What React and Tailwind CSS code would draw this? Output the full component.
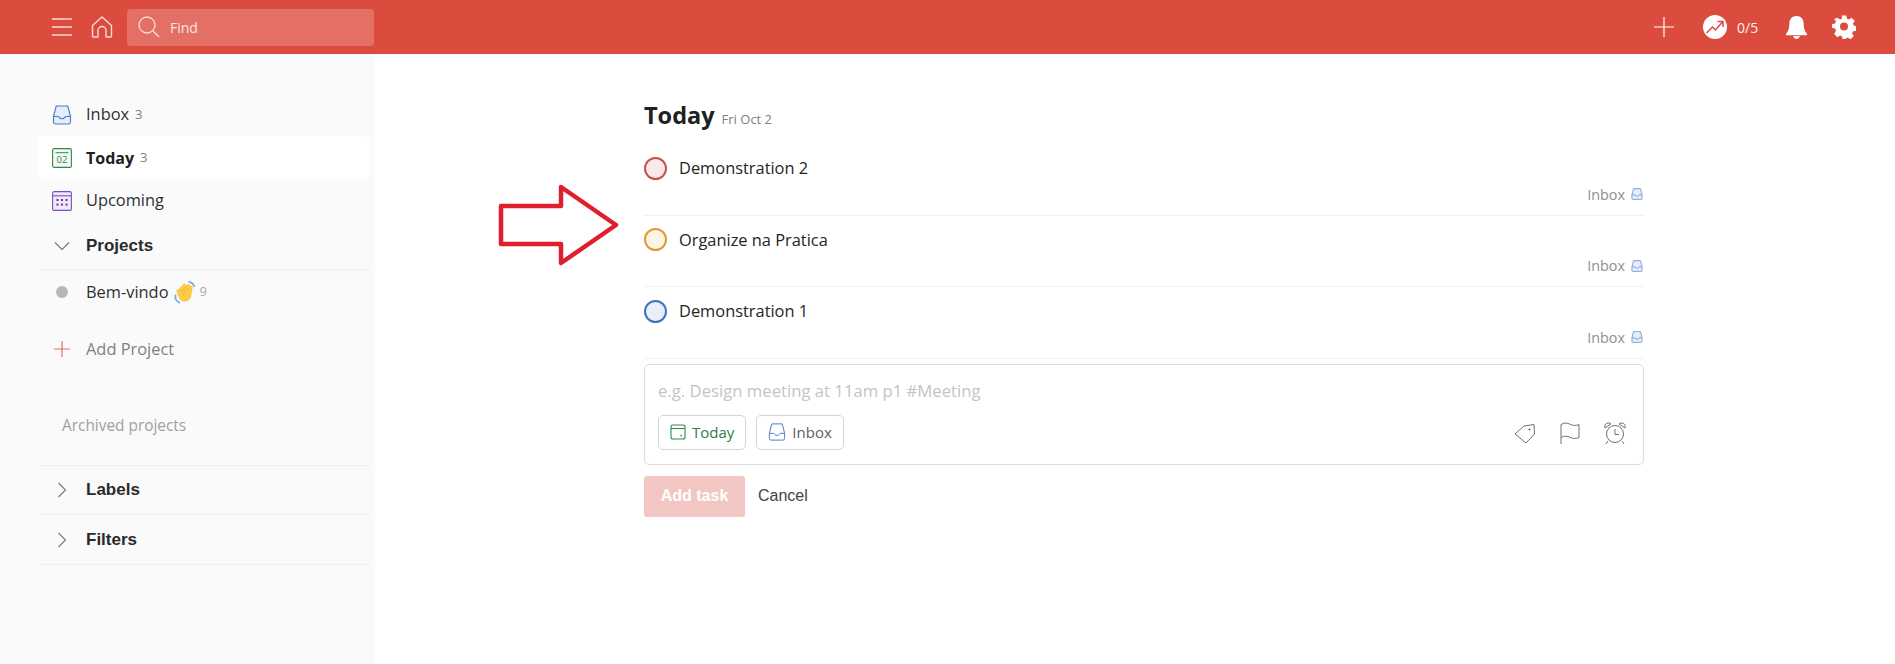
const uiFont = "font-['Open_Sans','Noto_Sans',sans-serif]";
const boldFont = "font-['Liberation_Sans',Arial,sans-serif]";

function InboxIcon({ className = "w-5 h-5", fill = "#e3edfb" }) {
  return (
    <svg viewBox="0 0 20 20" className={className} fill="none">
      <path d="M4.200 1h11.600l2.700 10.500v5.600a1.900 1.900 0 0 1-1.900 1.900H3.400a1.900 1.900 0 0 1-1.900-1.900V11.500z" fill={fill} stroke="#4d7cc4" strokeWidth="1.100" strokeLinejoin="round" />
      <path d="M1.700 11.500h4.600c.7 0 .9 2.300 3.700 2.300s3-2.300 3.700-2.300h4.600" stroke="#4d7cc4" strokeWidth="1.100" />
    </svg>
  );
}

function TodayIcon() {
  return (
    <svg viewBox="0 0 20 20" className="w-5 h-5" fill="none">
      <rect x="0.6" y="0.6" width="18.8" height="18.8" rx="1.5" fill="#f2f9f3" stroke="#2f8a4a" strokeWidth="1.100" />
      <path d="M3.500 4.700h13" stroke="#2f8a4a" strokeWidth="1" />
      <text x="10" y="15.300" textAnchor="middle" fontSize="9.500" fill="#3f7a52" fontFamily="'Open Sans',sans-serif">02</text>
    </svg>
  );
}

function UpcomingIcon() {
  return (
    <svg viewBox="0 0 20 20" className="w-5 h-5" fill="none">
      <rect x="0.6" y="0.6" width="18.8" height="18.8" rx="1.5" fill="#f1e8fc" stroke="#7a4fc0" strokeWidth="1.100" />
      <path d="M1 4.800h18" stroke="#7a4fc0" strokeWidth="1.100" />
      {[5.5, 10, 14.5].map((x) =>
        [9, 13.6].map((y) => <rect key={x + "-" + y} x={x - 1} y={y - 1} width="2" height="2" fill="#5c3a96" />)
      )}
    </svg>
  );
}

function Chevron({ open }) {
  return (
    <svg viewBox="0 0 20 20" className="w-5 h-5" fill="none" stroke="#777" strokeWidth="1.100">
      {open ? <path d="M3 6.500l7 7 7-7" /> : <path d="M6.500 3l7 7-7 7" />}
    </svg>
  );
}

function Wave() {
  return (
    <svg viewBox="0 0 22 24" className="w-[21px] h-[23px]" fill="none">
      <path d="M1.500 15c-.5 3 1 6 4 7.500M16 1c2.500.5 4.500 2 5 4.500" stroke="#7db4dc" strokeWidth="2" strokeLinecap="round" />
      <path d="M4 9l6-6c1-1 3 0 2.500 1.500L14 3.500c1.500-1 3 .5 2.500 2l1-.5c1.500-.5 2.500 1 2 2.500l-1.500 9c-1 4-6 6.500-10 4.500-2.500-1.500-3-4-4-6L2.500 11C2 10 3 8.500 4 9z" fill="#fbcb4a" />
      <path d="M7 11l6-5M9 14l6-6" stroke="#eeb02f" strokeWidth="1" strokeLinecap="round" />
    </svg>
  );
}

function NavItem({ icon, label, count, active }) {
  return (
    <div className={`flex items-center h-[43px] pl-[14px] rounded-[3px] ${active ? "bg-white" : ""}`}>
      <span className="w-5 h-5 flex items-center justify-center mr-[14px]">{icon}</span>
      <span className={active ? "text-[16px] font-bold text-[#202020]" : "text-[16.4px] text-[#303030]"}>{label}</span>
      <span className="ml-[6px] text-[13px] text-[#808080]">{count}</span>
    </div>
  );
}

function SectionHead({ label, open, height = "h-[49px]" }) {
  return (
    <div className={`flex items-center ${height} pl-[14px] border-b border-[#f0f0f0]`}>
      <span className="mr-[14px] flex"><Chevron open={open} /></span>
      <span className={`${boldFont} text-[17px] font-bold text-[#2a2a2a]`}>{label}</span>
    </div>
  );
}

function Sidebar() {
  return (
    <aside className="w-[375px] shrink-0 bg-[#fafafa] pl-[38px] pr-[6px] pt-[39px]">
      <NavItem icon={<InboxIcon />} label="Inbox" count="3" />
      <NavItem icon={<TodayIcon />} label="Today" count="3" active />
      <NavItem icon={<UpcomingIcon />} label="Upcoming" count="" />
      <SectionHead label="Projects" open height="h-[48px]" />
      <div className="flex items-center h-[44px] pl-[18px]">
        <span className="w-3 h-3 rounded-full bg-[#b8b8b8] mr-[18px]" />
        <span className="text-[16.4px] text-[#303030]">Bem-vindo</span>
        <span className="ml-[5px] flex"><Wave /></span>
        <span className="ml-[5px] text-[13px] text-[#aaaaaa]">9</span>
      </div>
      <div className="flex items-center h-[44px] mt-[13px] pl-[14px]">
        <svg viewBox="0 0 20 20" className="w-5 h-5 mr-[14px]" fill="none" stroke="#e0706a" strokeWidth="1.200">
          <path d="M10 2v16M2 10h16" />
        </svg>
        <span className="text-[16.4px] text-[#808080]">Add Project</span>
      </div>
      <div className="h-[95px] pl-[24px] pt-[43px] border-b border-[#f0f0f0] text-[15.4px] text-[#a0a0a0]">Archived projects</div>
      <SectionHead label="Labels" />
      <SectionHead label="Filters" height="h-[50px]" />
    </aside>
  );
}

function TaskRow({ title, ring, fill }) {
  return (
    <div className="h-[71.5px] border-b border-[#f0f0f0]">
      <div className="flex items-center pt-[12px]">
        <span className={`w-[23px] h-[23px] rounded-full border-2 ${ring} ${fill} mr-[12px]`} />
        <span className="text-[16.4px] text-[#252525]">{title}</span>
      </div>
      <div className="flex items-center justify-end gap-[6px] mt-[3px] pr-[1px] text-[14.4px] text-[#909090]">
        Inbox
        <InboxIcon className="w-3 h-3" />
      </div>
    </div>
  );
}

function Pill({ children }) {
  return (
    <span className="h-[35px] px-[11px] flex items-center gap-[6px] border border-[#d4d4d4] rounded-[5px] text-[15px]">
      {children}
    </span>
  );
}

function AddTaskForm() {
  return (
    <>
      <div className="mt-[5px] h-[101px] border border-[#dddddd] rounded-[5px] px-[13px] pt-[14px]">
        <div className="text-[16.7px] leading-[24px] text-[#c4c4c4]">e.g. Design meeting at 11am p1 #Meeting</div>
        <div className="flex items-center justify-between mt-[12px]">
          <div className="flex gap-[10px]">
            <Pill>
              <svg viewBox="0 0 16 16" className="w-[16px] h-[16px]" fill="none" stroke="#2f8a4a" strokeWidth="1.100">
                <rect x="1" y="1" width="14" height="14" rx="2" />
                <path d="M1 4.500h14" />
                <rect x="10.500" y="10.800" width="1.500" height="1.500" fill="#2f8a4a" stroke="none" />
              </svg>
              <span className="text-[#2f7d48]">Today</span>
            </Pill>
            <Pill>
              <InboxIcon className="w-[18px] h-[18px]" fill="#ffffff" />
              <span className="text-[#606060]">Inbox</span>
            </Pill>
          </div>
          <div className="flex items-center gap-[21px] pr-[3px] mb-[-2px]">
            <svg viewBox="0 0 24 24" className="w-6 h-6" fill="none" stroke="#707070" strokeWidth="1.000">
              <path d="M2 13l9-8 10-1.500L21.500 13l-8.500 9z" strokeLinejoin="round" />
              <circle cx="16.500" cy="8.500" r="1.100" fill="#707070" stroke="none" />
            </svg>
            <svg viewBox="0 0 24 24" className="w-6 h-6" fill="none" stroke="#707070" strokeWidth="1.000">
              <path d="M3 23V3.500c3-1.800 6-1.800 9-.3s6 1.800 9 .3v13c-3 1.500-6 1.300-9-.2s-6-1.500-9 .2" />
            </svg>
            <svg viewBox="0 0 24 24" className="w-6 h-6" fill="none" stroke="#707070" strokeWidth="1.000">
              <circle cx="12" cy="13" r="8.500" />
              <path d="M12 8v5.500h4M5 20l-2 3M19 20l2 3" />
              <path d="M2 7c-1-3 1-5 4-5 1 0 1.500.5 2 1zM22 7c1-3-1-5-4-5-1 0-1.500.5-2 1z" />
            </svg>
          </div>
        </div>
      </div>
      <div className="flex items-center mt-[11px]">
        <span className={`${boldFont} w-[101px] h-[41px] flex items-center justify-center rounded-[3px] bg-[#f2c6c2] text-white text-[16px] font-bold`}>Add task</span>
        <span className={`${boldFont} ml-[13px] text-[16px] text-[#444444]`}>Cancel</span>
      </div>
    </>
  );
}

function Header() {
  return (
    <header className="h-[54px] bg-[#db4c3f] flex items-center pl-[52px] pr-[39px]">
      <svg viewBox="0 0 20 18" className="w-5 h-[18px]" fill="none" stroke="#fbdcd9" strokeWidth="1.300">
        <path d="M0 1h20M0 9h20M0 17h20" />
      </svg>
      <svg viewBox="0 0 22 22" className="w-[22px] h-[22px] ml-[19px]" fill="none" stroke="#fbdcd9" strokeWidth="1.400">
        <path d="M1.500 20V9.500L11 1l9.500 8.500V20a1 1 0 0 1-1 1H15v-6.500a4 4 0 0 0-8 0V21H2.500a1 1 0 0 1-1-1z" strokeLinejoin="round" />
      </svg>
      <div className="ml-[14px] w-[247px] h-[37px] rounded-[4px] bg-[#e46f65] flex items-center pl-[11px]">
        <svg viewBox="0 0 22 22" className="w-[22px] h-[22px]" fill="none" stroke="#fbdcd9" strokeWidth="1.300">
          <circle cx="9" cy="9" r="8" />
          <path d="M14.800 14.800L21 21" />
        </svg>
        <span className="ml-[10px] text-[14px] font-medium text-[#fbe3e1]">Find</span>
      </div>
      <div className="ml-auto flex items-center">
        <svg viewBox="0 0 20 20" className="w-5 h-5" fill="none" stroke="#ffffff" strokeWidth="1.200">
          <path d="M10 0v20M0 10h20" />
        </svg>
        <svg viewBox="0 0 24 24" className="w-6 h-6 ml-[29px]">
          <circle cx="12" cy="12" r="12" fill="#ffffff" />
          <path d="M3.500 18l6-6 3 3 7-8M14.500 6.500h5.500V12" fill="none" stroke="#db4c3f" strokeWidth="1.500" />
        </svg>
        <span className="ml-[10px] text-[14px] text-[#fdf0ef] w-[26px]">0/5</span>
        <svg viewBox="0 0 22 24" className="w-[21px] h-[23px] ml-[23px]" fill="#ffffff">
          <path d="M11 0c4.800 0 7.500 3.500 7.500 8 0 5 1.200 8.500 3.500 10.500V20H0v-1.500C2.300 16.500 3.500 13 3.500 8 3.500 3.500 6.200 0 11 0z" />
          <path d="M7.500 21h7c-.5 2-2 3-3.500 3s-3-1-3.500-3z" />
        </svg>
        <svg viewBox="0 0 24 24" className="w-[24px] h-[24px] ml-[25px]" fill="#ffffff">
          <path fillRule="evenodd" d="M9.700 1h4.600l.6 3.100 2 .9 2.700-1.800 3.200 3.200L20.900 9l.9 2 2.200.7v4.600l-3.100.6-.9 2 1.800 2.700-3.200 3.200-2.700-1.800-2 .9-.6 1.100H10.700l-.6-3.100-2-.9-2.700 1.800-3.200-3.200L4 15.900l-.9-2L0 13.300V9.700l3.100-.6.9-2L2.200 4.400l3.200-1.200 2.700 1.800 2-.9z M12 8a4 4 0 1 0 0 8 4 4 0 0 0 0-8z" transform="translate(0.000 -0.500)" />
        </svg>
      </div>
    </header>
  );
}

export default function App() {
  return (
    <div className={`${uiFont} w-[1895px] h-[664px] overflow-hidden bg-white flex flex-col relative`}>
      <Header />
      <div className="flex flex-1">
        <Sidebar />
        <main className="ml-[269px] w-[1000px] pt-[44px]">
          <div className="flex items-baseline h-[34px]">
            <h1 className="text-[23.5px] font-bold text-[#202020]">Today</h1>
            <span className="ml-[7px] text-[13px] text-[#808080]">Fri Oct 2</span>
          </div>
          <div className="pt-[12px]">
            <TaskRow title="Demonstration 2" ring="border-[#c9504d]" fill="bg-[#f9eaea]" />
            <TaskRow title="Organize na Pratica" ring="border-[#e09a30]" fill="bg-[#fdf3e7]" />
            <TaskRow title="Demonstration 1" ring="border-[#3f73c0]" fill="bg-[#e8eff9]" />
          </div>
          <AddTaskForm />
        </main>
      </div>
      {/* red annotation arrow drawn over the page */}
      <svg viewBox="0 0 124 84" className="absolute left-[497px] top-[183px] w-[124px] h-[84px]" fill="none">
        <path d="M4 23h60V4l55 38-55 38V61H4z" stroke="#df1f2d" strokeWidth="4.500" strokeLinejoin="round" />
      </svg>
    </div>
  );
}
